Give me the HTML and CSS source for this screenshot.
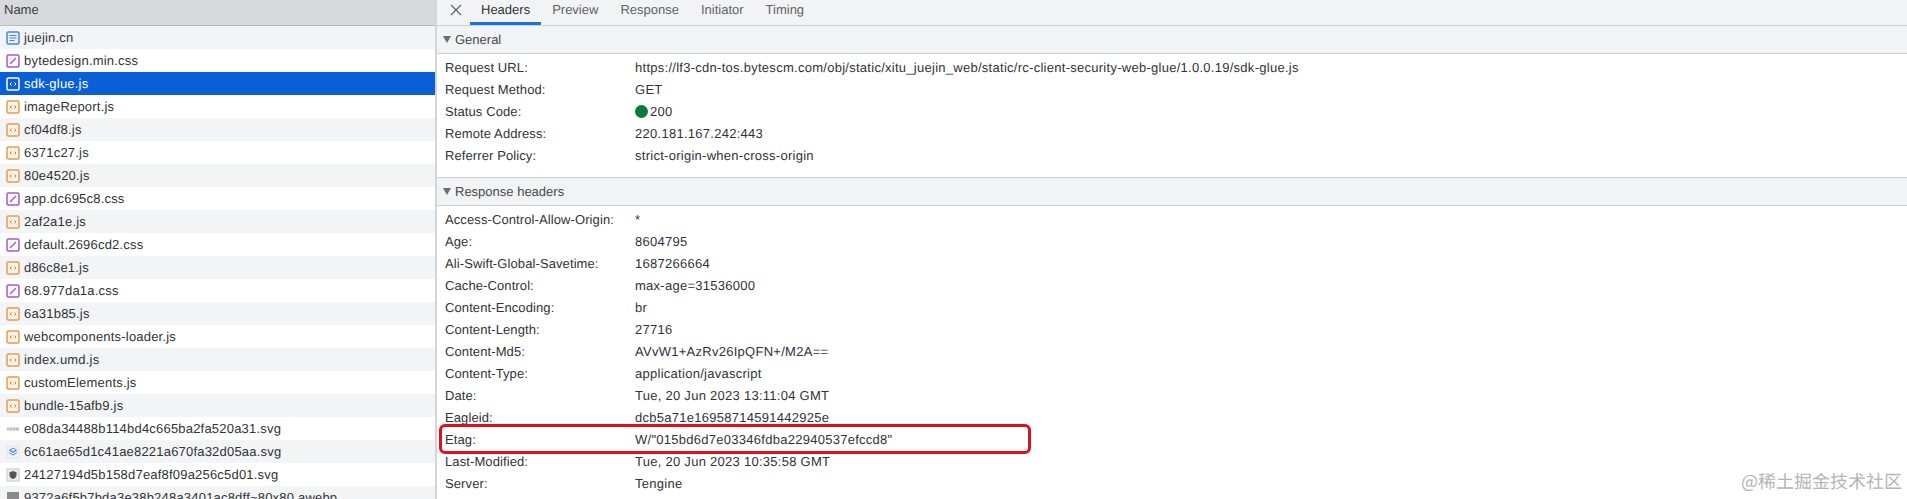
FILE: index.html
```html
<!DOCTYPE html>
<html lang="en">
<head>
<meta charset="utf-8">
<title>Network</title>
<link rel="stylesheet" href="styles.css">
</head>
<body>
<svg class="defs" width="0" height="0">
  <symbol id="i-doc" viewBox="0 0 14 14"><rect x="1" y="1" width="12" height="12" rx="1.5" fill="#e8f0fe" stroke="#4a86e0" stroke-width="1.5"/><path d="M3.5 4.5h7M3.5 7h7M3.5 9.5h5" stroke="#4a86e0" stroke-width="1.2"/></symbol>
  <symbol id="i-css" viewBox="0 0 14 14"><rect x="1" y="1" width="12" height="12" rx="1.5" fill="#fff" stroke="#a855d8" stroke-width="1.5"/><path d="M4 10l6-6" stroke="#a855d8" stroke-width="1.5"/></symbol>
  <symbol id="i-js" viewBox="0 0 14 14"><rect x="1" y="1" width="12" height="12" rx="1.5" fill="#fdf3e7" stroke="#e69a55" stroke-width="1.5"/><path d="M5.6 5.5L4 7l1.6 1.5M8.4 5.5L10 7 8.4 8.5" fill="none" stroke="#d9822b" stroke-width="1"/></symbol>
  <symbol id="i-jsw" viewBox="0 0 14 14"><rect x="1" y="1" width="12" height="12" rx="1.5" fill="#0a5fd6" stroke="#fff" stroke-width="1.5"/><path d="M5.6 5.5L4 7l1.6 1.5M8.4 5.5L10 7 8.4 8.5" fill="none" stroke="#fff" stroke-width="1"/></symbol>
  <symbol id="i-dots" viewBox="0 0 14 14"><rect x="1" y="5.5" width="12" height="3" fill="#b6bcd6"/><path d="M3 7h1M6 7h1M9 7h1" stroke="#fff" stroke-width="1"/></symbol>
  <symbol id="i-blue" viewBox="0 0 14 14"><rect x="1" y="1" width="12" height="12" fill="#eef3fb" stroke="#dfe5ee"/><path d="M3 5l4 2.5L11 5M3 7.5L7 10l4-2.5M7 3L4 5l3 2 3-2z" fill="none" stroke="#4a90e2" stroke-width="1"/></symbol>
  <symbol id="i-shield" viewBox="0 0 14 14"><rect x="1" y="1" width="12" height="12" fill="#eee" stroke="#c8c8c8"/><path d="M7 3l3.5 1.2V7c0 2-1.5 3.400-3.500 4-2-.6-3.500-2-3.500-4V4.200z" fill="#555"/></symbol>
  <symbol id="i-img" viewBox="0 0 14 14"><rect x="1" y="1" width="12" height="12" fill="#8a8a8a"/></symbol>
</svg>
<div class="app">
  <section class="list">
    <div class="list-head">Name</div>
    <div class="row gray"><svg class="ic"><use href="#i-doc"/></svg>juejin.cn</div>
    <div class="row"><svg class="ic"><use href="#i-css"/></svg>bytedesign.min.css</div>
    <div class="row selected"><svg class="ic"><use href="#i-jsw"/></svg>sdk-glue.js</div>
    <div class="row"><svg class="ic"><use href="#i-js"/></svg>imageReport.js</div>
    <div class="row gray"><svg class="ic"><use href="#i-js"/></svg>cf04df8.js</div>
    <div class="row"><svg class="ic"><use href="#i-js"/></svg>6371c27.js</div>
    <div class="row gray"><svg class="ic"><use href="#i-js"/></svg>80e4520.js</div>
    <div class="row"><svg class="ic"><use href="#i-css"/></svg>app.dc695c8.css</div>
    <div class="row gray"><svg class="ic"><use href="#i-js"/></svg>2af2a1e.js</div>
    <div class="row"><svg class="ic"><use href="#i-css"/></svg>default.2696cd2.css</div>
    <div class="row gray"><svg class="ic"><use href="#i-js"/></svg>d86c8e1.js</div>
    <div class="row"><svg class="ic"><use href="#i-css"/></svg>68.977da1a.css</div>
    <div class="row gray"><svg class="ic"><use href="#i-js"/></svg>6a31b85.js</div>
    <div class="row"><svg class="ic"><use href="#i-js"/></svg>webcomponents-loader.js</div>
    <div class="row gray"><svg class="ic"><use href="#i-js"/></svg>index.umd.js</div>
    <div class="row"><svg class="ic"><use href="#i-js"/></svg>customElements.js</div>
    <div class="row gray"><svg class="ic"><use href="#i-js"/></svg>bundle-15afb9.js</div>
    <div class="row"><svg class="ic"><use href="#i-dots"/></svg>e08da34488b114bd4c665ba2fa520a31.svg</div>
    <div class="row gray"><svg class="ic"><use href="#i-blue"/></svg>6c61ae65d1c41ae8221a670fa32d05aa.svg</div>
    <div class="row"><svg class="ic"><use href="#i-shield"/></svg>24127194d5b158d7eaf8f09a256c5d01.svg</div>
    <div class="row gray"><svg class="ic"><use href="#i-img"/></svg>9372a6f5b7bda3e38b248a3401ac8dff~80x80.awebp</div>
  </section>
  <section class="detail">
    <nav class="tabs">
      <svg class="close" viewBox="0 0 12 12"><path d="M1 1l10 10M11 1L1 11" stroke="#5f6368" stroke-width="1.2" fill="none"/></svg>
      <span class="tab active">Headers</span>
      <span class="tab">Preview</span>
      <span class="tab">Response</span>
      <span class="tab">Initiator</span>
      <span class="tab">Timing</span>
    </nav>
    <div class="sec-head"><i class="tri"></i>General</div>
    <div class="sec-body general">
      <div class="kv"><span class="k">Request URL:</span><span class="v">https://lf3-cdn-tos.bytescm.com/obj/static/xitu_juejin_web/static/rc-client-security-web-glue/1.0.0.19/sdk-glue.js</span></div>
      <div class="kv"><span class="k">Request Method:</span><span class="v">GET</span></div>
      <div class="kv"><span class="k">Status Code:</span><span class="v"><i class="dot"></i>200</span></div>
      <div class="kv"><span class="k">Remote Address:</span><span class="v">220.181.167.242:443</span></div>
      <div class="kv"><span class="k">Referrer Policy:</span><span class="v">strict-origin-when-cross-origin</span></div>
    </div>
    <div class="sec-head"><i class="tri"></i>Response headers</div>
    <div class="sec-body">
      <div class="kv"><span class="k">Access-Control-Allow-Origin:</span><span class="v">*</span></div>
      <div class="kv"><span class="k">Age:</span><span class="v">8604795</span></div>
      <div class="kv"><span class="k">Ali-Swift-Global-Savetime:</span><span class="v">1687266664</span></div>
      <div class="kv"><span class="k">Cache-Control:</span><span class="v">max-age=31536000</span></div>
      <div class="kv"><span class="k">Content-Encoding:</span><span class="v">br</span></div>
      <div class="kv"><span class="k">Content-Length:</span><span class="v">27716</span></div>
      <div class="kv"><span class="k">Content-Md5:</span><span class="v">AVvW1+AzRv26IpQFN+/M2A==</span></div>
      <div class="kv"><span class="k">Content-Type:</span><span class="v">application/javascript</span></div>
      <div class="kv"><span class="k">Date:</span><span class="v">Tue, 20 Jun 2023 13:11:04 GMT</span></div>
      <div class="kv"><span class="k">Eagleid:</span><span class="v">dcb5a71e16958714591442925e</span></div>
      <div class="kv mark"><span class="k">Etag:</span><span class="v">W/"015bd6d7e03346fdba22940537efccd8"</span><span class="redbox"></span></div>
      <div class="kv"><span class="k">Last-Modified:</span><span class="v">Tue, 20 Jun 2023 10:35:58 GMT</span></div>
      <div class="kv"><span class="k">Server:</span><span class="v">Tengine</span></div>
    </div>
  </section>
</div>
<div class="watermark">@稀土掘金技术社区</div>
</body>
</html>
```
FILE: styles.css
```css
* { box-sizing: border-box; }
html, body { margin: 0; height: 100%; overflow: hidden; background: #fff; }
body { font-family: "Liberation Sans", Arial, sans-serif; font-size: 13px; color: #303336; position: relative; text-rendering: geometricPrecision; }
.defs { position: absolute; }
.app { display: flex; height: 499px; }
.list { width: 435px; flex: none; overflow: hidden; height: 499px; }
.list-head { height: 26px; background: #d7d9dd; border-bottom: 1px solid #b9bbbf; padding-left: 4px; line-height: 19px; color: #3c4043; }
.row { height: 23px; display: flex; align-items: center; padding-left: 6px; white-space: nowrap; background: #fff; letter-spacing: 0.2px; }
.row.gray { background: #f3f4f5; }
.row.selected { background: #0a5fd6; color: #fff; }
.ic { width: 14px; height: 14px; margin-right: 4px; flex: none; }
.detail { flex: 1; min-width: 0; border-left: 2px solid #d4d5d8; }
.tabs { height: 26px; display: flex; align-items: flex-start; background: #f1f3f4; border-bottom: 1px solid #ccced1; color: #5f6368; }
.close { width: 12px; height: 12px; margin: 4px 8px 0 13px; flex: none; }
.tab { height: 25px; line-height: 19px; padding: 0 11px; }
.tab.active { color: #303336; border-bottom: 3px solid #1a73d8; }
.sec-head { height: 28px; background: #f1f3f4; border-bottom: 1px solid #ccced1; display: flex; align-items: center; padding-left: 6px; color: #45494d; }
.tri { width: 0; height: 0; border-left: 4px solid transparent; border-right: 4px solid transparent; border-top: 7px solid #6b6f73; margin-right: 4px; }
.sec-body { padding-top: 2px; background: #fff; }
.sec-body.general { height: 124px; border-bottom: 1px solid #ccced1; }
.kv { height: 22px; display: flex; align-items: center; position: relative; }
.k { width: 198px; padding-left: 8px; flex: none; letter-spacing: 0.1px; }
.v { white-space: nowrap; display: flex; align-items: center; letter-spacing: 0.27px; }
.dot { width: 13px; height: 13px; border-radius: 50%; background: #0a7a3c; margin-right: 2px; display: inline-block; }
.redbox { position: absolute; left: 2px; width: 592px; top: -4px; bottom: -4px; border: 3px solid #e0101c; border-radius: 6px; }
.watermark { position: absolute; left: 1741px; top: 469px; font-family: "Noto Sans CJK SC", sans-serif; font-size: 18px; line-height: 24px; color: #b5b5b5; white-space: nowrap; }
```
